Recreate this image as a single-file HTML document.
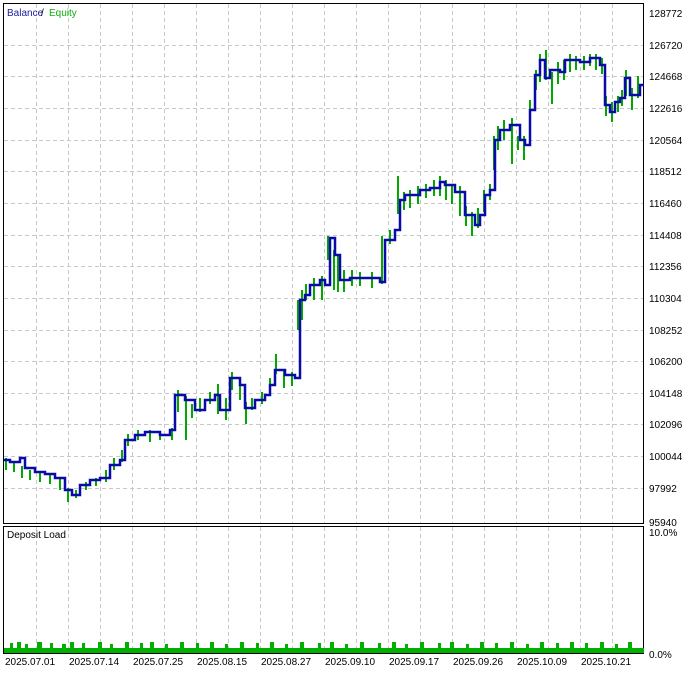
<!DOCTYPE html>
<html><head><meta charset="utf-8"><style>
body{margin:0;background:#fff;width:687px;height:670px;overflow:hidden;font-family:"Liberation Sans",sans-serif}
svg text{font-family:"Liberation Sans",sans-serif;font-size:10px;fill:#000}
</style></head><body>
<svg width="687" height="670" xmlns="http://www.w3.org/2000/svg">
<rect width="687" height="670" fill="#fff"/>
<g stroke="#c8c8c8" stroke-dasharray="4,3" stroke-width="1">
<path d="M36.5 4V523M68.5 4V523M100.5 4V523M132.5 4V523M164.5 4V523M196.5 4V523M228.5 4V523M260.5 4V523M292.5 4V523M324.5 4V523M356.5 4V523M388.5 4V523M420.5 4V523M452.5 4V523M484.5 4V523M516.5 4V523M548.5 4V523M580.5 4V523M612.5 4V523"/>
<path d="M36.5 527V653M68.5 527V653M100.5 527V653M132.5 527V653M164.5 527V653M196.5 527V653M228.5 527V653M260.5 527V653M292.5 527V653M324.5 527V653M356.5 527V653M388.5 527V653M420.5 527V653M452.5 527V653M484.5 527V653M516.5 527V653M548.5 527V653M580.5 527V653M612.5 527V653"/>
<path d="M4 45.5H644M4 76.5H644M4 108.5H644M4 140.5H644M4 171.5H644M4 203.5H644M4 235.5H644M4 266.5H644M4 298.5H644M4 330.5H644M4 361.5H644M4 393.5H644M4 424.5H644M4 456.5H644M4 488.5H644"/>
</g>
<rect x="3.5" y="3.5" width="640" height="520" fill="none" stroke="#000"/>
<rect x="3.5" y="526.5" width="640" height="127" fill="none" stroke="#000"/>
<g fill="#00b000">
<rect x="4" y="648" width="640" height="5"/>
<path d="M10 648V643h3v5zM17 648V642h4v6zM25 648V644h3v4zM37 648V642h5v6zM50 648V643h3v5zM62 648V644h4v4zM70 648V642h4v6zM82 648V643h3v5zM98 648V642h4v6zM110 648V644h3v4zM125 648V642h4v6zM140 648V643h3v5zM150 648V642h4v6zM165 648V644h3v4zM180 648V642h4v6zM196 648V643h3v5zM210 648V642h4v6zM225 648V644h3v4zM240 648V642h4v6zM256 648V643h3v5zM270 648V642h4v6zM285 648V644h3v4zM300 648V642h4v6zM318 648V643h3v5zM330 648V642h4v6zM345 648V644h3v4zM360 648V642h4v6zM378 648V643h3v5zM392 648V642h4v6zM405 648V644h3v4zM420 648V642h4v6zM438 648V643h3v5zM450 648V642h4v6zM466 648V644h3v4zM480 648V642h4v6zM495 648V643h3v5zM510 648V642h4v6zM526 648V644h3v4zM540 648V642h4v6zM556 648V643h3v5zM570 648V642h4v6zM585 648V643h3v5zM600 648V642h4v6zM615 648V644h3v4zM628 648V642h4v6z"/>
</g>
<g fill="none" stroke="#00a800" stroke-width="2">
<path d="M6 458V470M14 462V472M22 466V478M30 470V480M40 472V482M50 474V484M60 478V490M68 488V502M76 490V498M86 482V490M96 478V486M106 470V482M114 458V470M122 450V462M128 434V446M138 430V440M150 430V442M160 432V440M172 428V440M178 390V412M186 396V440M192 404V418M200 398V412M210 392V404M218 384V414M226 398V420M232 372V390M240 380V400M246 402V424M252 398V410M262 392V404M270 378V394M276 354V374M284 370V388M292 372V386M298 300V330M302 290V320M306 284V300M314 278V300M322 276V300M328 236V260M334 250V290M338 256V292M344 270V292M352 270V286M360 272V286M372 272V288M382 236V284M390 230V244M398 176V214M404 192V210M410 190V208M418 186V204M426 184V198M434 180V196M440 176V196M446 180V200M452 186V204M460 186V216M466 206V226M472 212V236M478 208V228M484 190V212M490 184V200M494 136V170M498 126V150M504 120V140M512 118V164M518 136V150M524 136V160M530 100V124M536 70V90M540 54V82M546 50V80M552 72V104M558 62V84M564 60V80M570 54V72M576 56V70M584 56V70M590 54V66M596 54V70M602 58V74M606 96V116M612 102V122M618 96V112M622 90V106M626 70V96M632 88V110M638 76V98"/>
</g>
<polyline fill="none" stroke="#0a0aa8" stroke-width="2.5" points="4,460 10,460 10,462 20,462 20,458 25,458 25,468 35,468 35,472 45,472 45,474 55,474 55,478 65,478 65,490 72,490 72,495 80,495 80,485 90,485 90,480 100,480 100,478 110,478 110,465 120,465 120,460 125,460 125,440 135,440 135,435 145,435 145,432 160,432 160,435 170,435 170,430 175,430 175,395 185,395 185,400 195,400 195,410 205,410 205,400 215,400 215,395 220,395 220,410 230,410 230,378 240,378 240,385 245,385 245,408 255,408 255,400 265,400 265,395 270,395 270,385 275,385 275,370 285,370 285,375 295,375 295,378 300,378 300,300 305,300 305,295 310,295 310,285 320,285 320,280 325,280 325,285 330,285 330,238 335,238 335,255 340,255 340,280 350,280 350,278 360,278 380,278 380,282 385,282 385,240 395,240 395,230 400,230 400,200 405,200 405,195 420,195 420,190 430,190 430,188 440,188 440,182 445,182 445,185 455,185 455,192 465,192 465,215 475,215 475,225 480,225 480,215 485,215 485,195 490,195 490,190 495,190 495,140 500,140 500,130 510,130 510,125 520,125 520,140 525,140 525,145 530,145 530,110 535,110 535,75 540,75 540,60 545,60 545,78 550,78 550,70 560,70 560,72 565,72 565,60 580,60 580,62 590,62 590,58 600,58 600,65 605,65 605,105 610,105 610,112 615,112 615,102 620,102 620,98 625,98 625,78 630,78 630,95 640,95 640,85 644,85"/>
<text x="7" y="16" style="fill:#1a1aa0">Balance</text><text x="41" y="16"> / </text><text x="49" y="16" style="fill:#10b010">Equity</text>
<text x="7" y="538">Deposit Load</text>
<g>
<text x="649" y="17">128772</text><text x="649" y="49">126720</text><text x="649" y="80">124668</text><text x="649" y="112">122616</text><text x="649" y="144">120564</text><text x="649" y="175">118512</text><text x="649" y="207">116460</text><text x="649" y="239">114408</text><text x="649" y="270">112356</text><text x="649" y="302">110304</text><text x="649" y="334">108252</text><text x="649" y="365">106200</text><text x="649" y="397">104148</text><text x="649" y="428">102096</text><text x="649" y="460">100044</text><text x="649" y="492">97992</text><text x="649" y="526">95940</text>
<text x="649" y="536">10.0%</text><text x="649" y="658">0.0%</text>
</g>
<g>
<text x="5" y="665">2025.07.01</text><text x="69" y="665">2025.07.14</text><text x="133" y="665">2025.07.25</text><text x="197" y="665">2025.08.15</text><text x="261" y="665">2025.08.27</text><text x="325" y="665">2025.09.10</text><text x="389" y="665">2025.09.17</text><text x="453" y="665">2025.09.26</text><text x="517" y="665">2025.10.09</text><text x="581" y="665">2025.10.21</text>
</g>
</svg>
</body></html>
